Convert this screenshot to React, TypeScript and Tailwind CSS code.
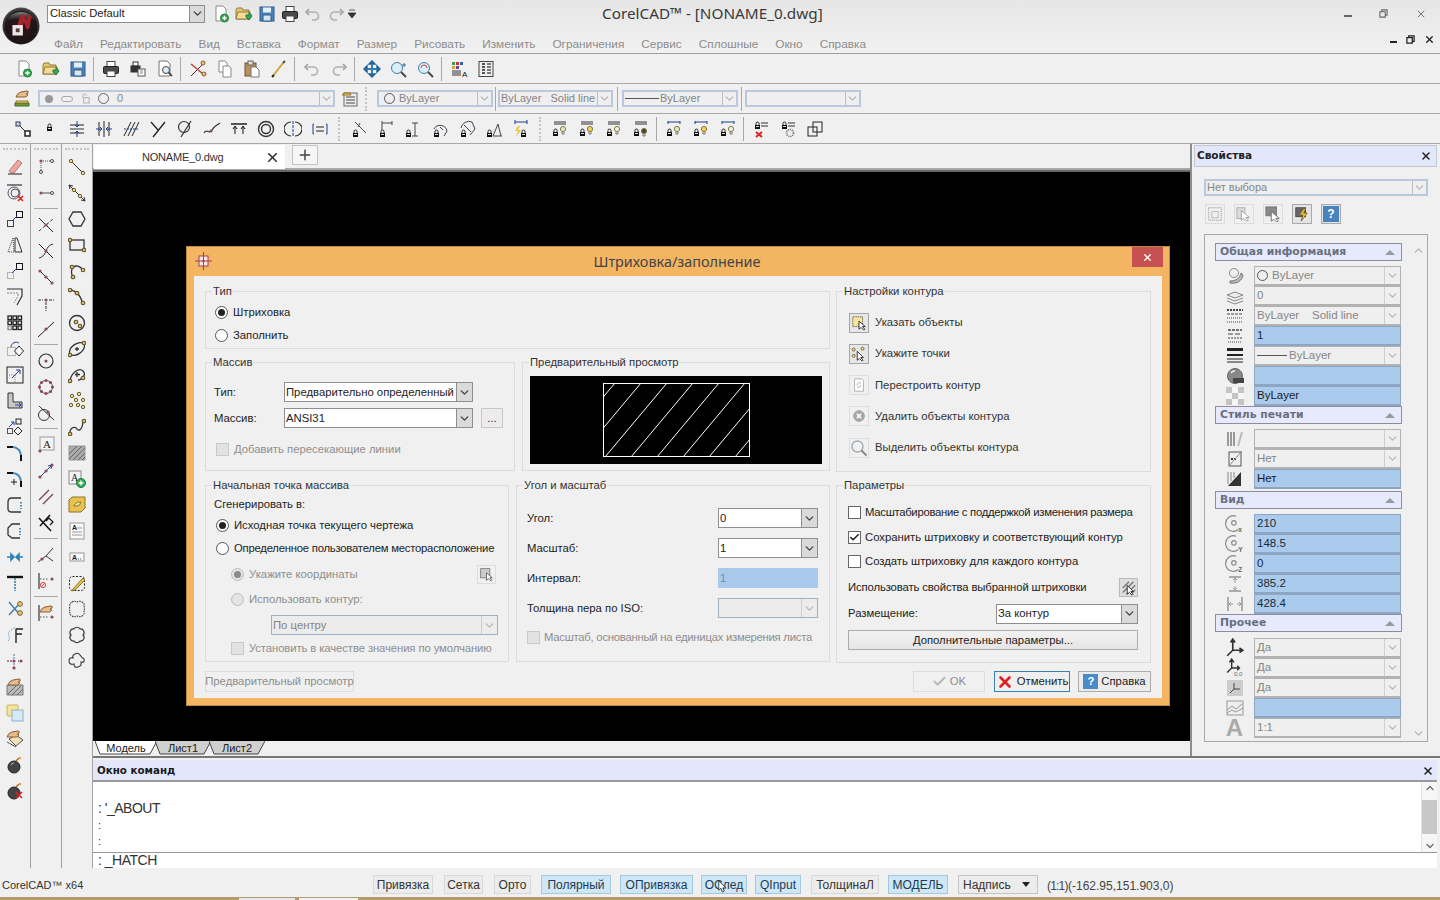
import type { ReactNode } from 'react'
import { Check, ChevronDown, ChevronUp, Plus, X } from 'lucide-react'

const Ic = ({ children, s = 18, sw = 1 }: { children?: ReactNode; s?: number; sw?: number }) => (
    <svg viewBox="0 0 18 18" width={s} height={s} fill="none" stroke="#333" strokeWidth={sw}>
        {children}
    </svg>
)

// small drawing helpers
const nr = (x: number, y: number) => <circle cx={x} cy={y} r={1.7} fill="#f3dc9a" stroke="#6b5a2a" />
const mr = (x: number, y: number) => <circle cx={x} cy={y} r={1.6} fill="#8c4a66" stroke="none" />
const op = (x: number, y: number) => <circle cx={x} cy={y} r={1.5} fill="#fff" stroke="#444" />
const lock = (x: number, y: number) => (
    <>
        <path d={`M${x + 1} ${y + 3}v-1.5a1.5 1.5 0 0 1 3 0v1.5`} stroke="#222" />
        <rect x={x} y={y + 3} width={5} height={4} fill="#111" stroke="none" />
        <rect x={x + 1} y={y + 4} width={3} height={1} fill="#ddd" stroke="none" />
    </>
)
const bulb = (x: number, y: number, f = '#f6d34f') => (
    <>
        <circle cx={x} cy={y} r={2.6} fill={f} stroke="#8a7a3a" />
        <path d={`M${x - 1} ${y + 3}v2h2v-2`} stroke="#777" />
    </>
)
const hand = (x: number, y: number) => (
    <path
        d={`M${x} ${y + 5}q1-4 5-5l6-1q2 0 1 2l-2 1 2 1-2 2h-4z`}
        fill="#e8bd8c"
        stroke="#8a5f35"
    />
)

const IconNew = () => (
    <Ic>
        <path d="M4 1h7l3 3v12H4z" fill="#fff" stroke="#8a8a8a" />
        <circle cx="12.5" cy="13" r="4" fill="#35a853" stroke="#1e7a38" />
        <path d="M12.5 10.8v4.4M10.3 13h4.4" stroke="#fff" strokeWidth="1.4" />
    </Ic>
)
const IconOpen = () => (
    <Ic>
        <path d="M1 5l1-2h5l1 2h6v9H1z" fill="#e7c86f" stroke="#94793a" />
        <path d="M3 7h12l-2 7H1z" fill="#f3dc9a" stroke="#94793a" />
        <path d="M11 10h3V7l3 4-3 4-3-3z" fill="#3aa655" stroke="#1e7a38" />
    </Ic>
)
const IconSave = () => (
    <Ic>
        <rect x="2" y="2" width="14" height="14" fill="#4f83b8" stroke="#2b5a8c" />
        <rect x="5" y="2.5" width="8" height="5" fill="#e6eef6" stroke="none" />
        <rect x="5" y="10" width="8" height="6" fill="#dbe6f0" stroke="#2b5a8c" />
    </Ic>
)
const IconPrint = () => (
    <Ic>
        <rect x="5" y="1.5" width="8" height="5" fill="#fff" stroke="#444" />
        <rect x="1.5" y="6.5" width="15" height="7" rx="1" fill="#4a4a4a" stroke="#222" />
        <rect x="5" y="11" width="8" height="5.5" fill="#fff" stroke="#444" />
    </Ic>
)
const IconUndo = () => (
    <Ic sw={1.6}>
        <path d="M5 4l-3 3 3 3" stroke="#a0a0a0" />
        <path d="M2.5 7H10a4 4 0 0 1 1 8H8" stroke="#b0b0b0" />
    </Ic>
)
const IconRedo = () => (
    <Ic sw={1.6}>
        <path d="M13 4l3 3-3 3" stroke="#a0a0a0" />
        <path d="M15.5 7H8a4 4 0 0 0-1 8h3" stroke="#b0b0b0" />
    </Ic>
)

const toolRow1: (ReactNode | 'sep')[] = [
    <IconNew />,
    <IconOpen />,
    <IconSave />,
    'sep',
    <IconPrint />,
    <Ic>
        <rect x="4" y="2" width="5" height="4" fill="#fff" />
        <rect x="2" y="6" width="9" height="6" fill="#333" />
        <rect x="9" y="9" width="7" height="7" fill="#fff" stroke="#555" />
        <path d="M11 11h3M11 13h3" stroke="#888" />
    </Ic>,
    <Ic>
        <path d="M3 1h8l3 3v12H3z" fill="#fff" stroke="#777" />
        <circle cx="10" cy="10" r="3.5" fill="#dcecf8" stroke="#444" />
        <path d="M12.5 12.5L16 16" strokeWidth="1.6" />
    </Ic>,
    'sep',
    <Ic>
        <path d="M2 16L14 4" stroke="#333" />
        <path d="M2 4l12 10" stroke="#c0392b" strokeWidth="1.3" />
        <circle cx="14" cy="3" r="2" fill="#e8c36a" stroke="#8a5f35" />
        <circle cx="15" cy="14" r="2" fill="#e8c36a" stroke="#8a5f35" />
    </Ic>,
    <Ic>
        <path d="M3 1h6l2 2v9H3z" fill="#fff" stroke="#888" />
        <path d="M7 6h6l2 2v9H7z" fill="#fff" stroke="#888" />
    </Ic>,
    <Ic>
        <rect x="2" y="3" width="11" height="13" fill="#b8925a" stroke="#6f5430" />
        <rect x="5" y="1" width="5" height="4" fill="#ddd" stroke="#666" />
        <path d="M8 7h5l3 3v7H8z" fill="#fff" stroke="#777" />
    </Ic>,
    <Ic sw={2}>
        <path d="M3 16L13 3" stroke="#d6a332" />
        <path d="M13 3l2-2" stroke="#444" />
        <path d="M2 17l2-2" stroke="#222" />
    </Ic>,
    'sep',
    <IconUndo />,
    <IconRedo />,
    'sep',
    <Ic sw={1.4}>
        <path d="M9 1l3 3H6zM9 17l3-3H6zM1 9l3-3v6zM17 9l-3-3v6z" fill="#2f7fb8" stroke="#1f5f90" />
        <path d="M9 4v10M4 9h10" stroke="#2f7fb8" strokeWidth="2" />
    </Ic>,
    <Ic>
        <circle cx="7" cy="8" r="5.5" fill="#dceef8" stroke="#3f7fa8" />
        <path d="M11 12l5 5" stroke="#444" strokeWidth="1.8" />
        <path d="M14 3v4M12 5h4" stroke="#2a6f9a" />
    </Ic>,
    <Ic>
        <circle cx="7" cy="8" r="5.5" fill="#dceef8" stroke="#3f7fa8" />
        <path d="M11 12l5 5" stroke="#444" strokeWidth="1.8" />
        <path d="M4 8a3 3 0 0 1 6 0" stroke="#c44" />
    </Ic>,
    'sep',
    <Ic>
        <rect x="2" y="2" width="3" height="3" fill="#3a9a4a" stroke="none" />
        <rect x="6" y="2" width="3" height="3" fill="#c0392b" stroke="none" />
        <rect x="10" y="2" width="3" height="3" fill="#3a5fb0" stroke="none" />
        <rect x="2" y="6" width="3" height="3" fill="#d6a332" stroke="none" />
        <rect x="6" y="6" width="3" height="3" fill="#7a3fa0" stroke="none" />
        <path d="M2 11h9M2 13h9M2 15h9" />
        <text x="12" y="17" fontSize="8" fontFamily="Liberation Sans" stroke="none" fill="#111">A</text>
    </Ic>,
    <Ic>
        <rect x="2" y="1.5" width="14" height="15" fill="#eee" stroke="#444" />
        <path d="M5 4h3M5 7h3M5 10h3M5 13h3" stroke="#222" strokeWidth="1.6" />
        <path d="M10 4h4M10 7h4M10 10h4M10 13h4" stroke="#555" strokeWidth="1.6" />
    </Ic>,
]

const linesTop = <path d="M3 2h12M3 4h12" stroke="#333" />

const toolRow3: (ReactNode | 'grip' | 'sep')[] = [
    <Ic>
        <path d="M5 5l8 8" stroke="#335" />
        <rect x="2" y="2" width="4" height="4" fill="#cdd8ee" stroke="#335" />
        <rect x="11" y="11" width="5" height="5" fill="#fff" stroke="#222" strokeWidth="1.5" />
    </Ic>,
    <Ic>{lock(6, 4)}</Ic>,
    <Ic>
        <path d="M2 9h14" />
        <path d="M2 5h14M2 13h14" stroke="#222" />
        <path d="M9 1v6l-2-2M9 7l2-2M9 17v-6l-2 2M9 11l2 2" stroke="#1c3f8f" />
    </Ic>,
    <Ic>
        <path d="M4 2v14M9 1v16M14 2v14" stroke="#222" />
        <path d="M1 9h6l-2-2M7 9l-2 2M17 9h-6l2-2M11 9l2 2" stroke="#1c3f8f" />
    </Ic>,
    <Ic>
        <path d="M2 16L9 2M6 16L13 2M10 16L17 2" stroke="#222" />
        <path d="M2 9h14" stroke="#1c3f8f" strokeDasharray="2 1" />
    </Ic>,
    <Ic sw={1.3}>
        <path d="M2 2l7 8M16 2L4 17" stroke="#222" />
    </Ic>,
    <Ic>
        <circle cx="8" cy="7" r="5.5" stroke="#333" strokeWidth="1.2" />
        <path d="M15 1L5 17" stroke="#333" strokeWidth="1.2" />
    </Ic>,
    <Ic sw={1.2}>
        <path d="M1 13c3-5 5 2 8-3s4-4 8-7" />
        {mr(8, 11)}
    </Ic>,
    <Ic>
        <path d="M1 4h16" stroke="#111" strokeWidth="1.4" />
        <path d="M5 14V7M13 14V7M3 9l2-3 2 3M11 9l2-3 2 3" stroke="#111" />
    </Ic>,
    <Ic>
        <circle cx="9" cy="9" r="7.5" strokeWidth="1.4" />
        <circle cx="9" cy="9" r="4.5" strokeWidth="1.4" />
    </Ic>,
    <Ic>
        <path d="M9 1v16" stroke="#1c3f8f" strokeDasharray="3 1" />
        <path d="M7 2a7 7 0 0 0 0 14M11 2a7 7 0 0 1 0 14" strokeWidth="1.2" />
    </Ic>,
    <Ic>
        <path d="M2 4v10h1M16 4v10h-1M2 4h1M15 4h1" stroke="#1c3f8f" />
        <path d="M5 7h8M5 11h8" stroke="#222" />
    </Ic>,
    'grip',
    <Ic>
        {lock(3, 10)}
        <path d="M5 2l11 11M10 3l-2 4" stroke="#445" />
    </Ic>,
    <Ic>
        {lock(3, 10)}
        <path d="M5 3h10M5 1v4M15 1v4M5 5v5" stroke="#445" />
    </Ic>,
    <Ic>
        {lock(2, 10)}
        <path d="M11 3v13M8 3h6M8 16h6" stroke="#445" />
    </Ic>,
    <Ic>
        {lock(3, 10)}
        <path d="M3 9a7 7 0 0 1 13 2l-3 5" stroke="#445" />
        <path d="M9 7l3 3" stroke="#445" />
    </Ic>,
    <Ic>
        {lock(3, 10)}
        <path d="M3 8a8 8 0 0 1 11-6l3 7-5 6" stroke="#445" />
        <path d="M6 5l7 7" stroke="#445" />
    </Ic>,
    <Ic>
        {lock(2, 10)}
        <path d="M8 16h9M8 16L13 4M13 4l3 12" stroke="#445" />
    </Ic>,
    <Ic>
        {lock(9, 10)}
        <path d="M3 2h12M3 0v4M15 0v4" stroke="#1c3f8f" />
        <path d="M6 6L3 11h3l-2 6 5-7H6l2-4z" fill="#e8c63c" stroke="none" />
    </Ic>,
    'grip',
    <Ic>{linesTop}{lock(2, 9)}{bulb(12, 9, '#dfe8d0')}</Ic>,
    <Ic>{linesTop}{lock(2, 9)}{bulb(12, 9)}</Ic>,
    <Ic>{linesTop}{lock(2, 9)}{bulb(12, 9, '#eee')}</Ic>,
    <Ic>{linesTop}{lock(2, 9)}{bulb(12, 11, '#444')}</Ic>,
    'sep',
    <Ic>
        <path d="M3 2h12M3 1v3M15 1v3" stroke="#1c3f8f" />
        {lock(2, 9)}
        {bulb(12, 9, '#dfe8d0')}
    </Ic>,
    <Ic>
        <path d="M3 2h12M3 1v3M15 1v3" stroke="#1c3f8f" />
        {lock(2, 9)}
        {bulb(12, 9)}
    </Ic>,
    <Ic>
        <path d="M3 2h12M3 1v3M15 1v3" stroke="#1c3f8f" />
        {lock(2, 9)}
        {bulb(12, 9, '#eee')}
    </Ic>,
    'sep',
    <Ic>
        <path d="M9 3h7M9 6h7" stroke="#333" />
        {lock(3, 2)}
        <path d="M4 12l6 5M10 12l-6 5" stroke="#d22" strokeWidth="2" />
    </Ic>,
    <Ic>
        <path d="M9 3h7M9 6h7" stroke="#333" />
        {lock(3, 2)}
        <circle cx="11" cy="13" r="3.5" stroke="#666" strokeDasharray="1 1" strokeWidth="1.6" />
    </Ic>,
    <Ic>
        <rect x="7" y="2" width="9" height="10" stroke="#222" />
        <rect x="2" y="7" width="9" height="9" stroke="#222" />
    </Ic>,
]

const col1: ReactNode[] = [
    <Ic>
        <path d="M3 13L12 2l4 3-8 10H5z" fill="#eba8a0" stroke="#b87a70" />
        <path d="M2 16h14" stroke="#555" strokeWidth="1.4" />
    </Ic>,
    <Ic>
        <path d="M1 1h15" strokeWidth="1.2" />
        <circle cx="8" cy="9" r="6" stroke="#556" />
        <circle cx="9" cy="9" r="4" stroke="#556" />
        <path d="M12 12l5 5M17 12l-5 5" stroke="#d22" strokeWidth="1.6" />
    </Ic>,
    <Ic>
        <rect x="1.5" y="10.5" width="6" height="6" stroke="#444" />
        <rect x="10.5" y="1.5" width="6" height="6" stroke="#111" />
        <path d="M6 11l5-5" stroke="#1c3f8f" />
    </Ic>,
    <Ic>
        <path d="M7 2L2 16h6z" stroke="#333" strokeDasharray="1 1" />
        <path d="M9 2h2l5 14H9z" stroke="#333" />
    </Ic>,
    <Ic>
        <rect x="1.5" y="10.5" width="6" height="6" stroke="#777" strokeDasharray="1 1" />
        <rect x="10.5" y="1.5" width="6" height="6" stroke="#111" />
        <path d="M6 11l5-5" stroke="#1c3f8f" />
    </Ic>,
    <Ic>
        <path d="M1 1h15v7l-5 9" strokeWidth="1.2" />
        <path d="M1 5h11v3l-4 7" stroke="#888" strokeDasharray="2 1" />
    </Ic>,
    <Ic sw={1.3}>
        {[2, 7, 12].flatMap((x) =>
            [2, 7, 12].map((y) => <rect key={`${x}-${y}`} x={x} y={y} width="3.5" height="3.5" stroke={y === 12 && x === 2 ? '#888' : '#222'} />),
        )}
    </Ic>,
    <Ic>
        <rect x="1.5" y="7.5" width="8" height="8" stroke="#777" strokeDasharray="1 1" />
        <path d="M13 6l4.5 5-4.5 5-4.5-5z" fill="#fff" stroke="#222" />
        <path d="M5 7c0-4 5-6 8-4" stroke="#1c3f8f" />
    </Ic>,
    <Ic>
        <rect x="1" y="1" width="16" height="16" stroke="#222" />
        <rect x="1" y="9" width="8" height="8" stroke="#888" strokeDasharray="1 1" />
        <path d="M6 12l8-8M10 4h4v4" stroke="#1c3f8f" />
    </Ic>,
    <Ic>
        <path d="M2 1h5v9h9v6H2z" fill="#c8c8c8" stroke="#333" />
        <path d="M9 13h6M13 11l2 2-2 2" stroke="#1c3f8f" />
    </Ic>,
    <Ic>
        <rect x="1.5" y="10.5" width="5" height="5" stroke="#555" />
        <rect x="10" y="1" width="5" height="5" stroke="#222" />
        <path d="M12 9l4 4-4 4-4-4z" stroke="#222" />
        <path d="M3 9l5-5M5 4h3v3" stroke="#1c3f8f" />
    </Ic>,
    <Ic sw={2}>
        <path d="M1 3h6" stroke="#111" />
        <path d="M7 3q7 1 8 8" stroke="#4a88b8" />
        <path d="M15 11v6" stroke="#111" />
    </Ic>,
    <Ic>
        <path d="M1 3h6" stroke="#111" strokeWidth="2" />
        <path d="M7 3q7 1 8 8" stroke="#4a88b8" strokeWidth="2" />
        <path d="M15 11v6" stroke="#111" strokeWidth="2" />
        <path d="M8 9v6M5 12h6" stroke="#222" />
    </Ic>,
    <Ic sw={1.3}>
        <path d="M15 2H6Q2 2 2 6v7q0 3 4 3h9" />
        <path d="M15 6v7" stroke="#4a88b8" strokeDasharray="1.5 1.5" strokeWidth="2" />
    </Ic>,
    <Ic sw={1.3}>
        <path d="M14 2H6L2 6v7l4 3h8" />
        <path d="M14 6v7" stroke="#4a88b8" strokeDasharray="1.5 1.5" strokeWidth="2" />
    </Ic>,
    <Ic>
        <path d="M1 9h5M5 6l3 3-3 3z" fill="#2f7fb8" stroke="#2f7fb8" strokeWidth="1.6" />
        <path d="M17 9h-5M13 6l-3 3 3 3z" fill="#2f7fb8" stroke="#2f7fb8" strokeWidth="1.6" />
    </Ic>,
    <Ic>
        <path d="M1 3h16" stroke="#111" strokeWidth="2.4" />
        <path d="M9 4v13" stroke="#3a7fa8" strokeWidth="1.6" strokeDasharray="2 1" />
    </Ic>,
    <Ic>
        <path d="M3 2l11 13M15 2L3 15" stroke="#3a7fa8" strokeWidth="1.4" />
        <circle cx="14" cy="4" r="2.4" fill="#e8c36a" stroke="#8a5f35" />
        <circle cx="14" cy="13" r="2.4" fill="#e8c36a" stroke="#8a5f35" />
    </Ic>,
    <Ic>
        <path d="M10 3h7M10 8h6M10 3v14" stroke="#222" strokeWidth="1.4" />
        <path d="M2 15c4-3-2-6 2-10s6-3 6-3" stroke="#6aa8cc" strokeDasharray="2 1" />
    </Ic>,
    <Ic>
        <path d="M1 9h5M12 9h1" stroke="#333" strokeDasharray="2 1" />
        <path d="M8 2v5M8 11v5" stroke="#3a7fa8" strokeDasharray="2 1" />
        {mr(8, 9)}
        {mr(15, 9)}
        {mr(8, 16)}
    </Ic>,
    <Ic>
        <path d="M1 7h16v10H1z" fill="#bbb" stroke="#777" />
        <path d="M2 16L10 8M6 17l9-9M11 17l6-6" stroke="#666" />
        {hand(2, 2)}
    </Ic>,
    <Ic>
        <rect x="1" y="1" width="11" height="11" rx="1" fill="#f5e49a" stroke="#c9b35e" />
        <rect x="6" y="6" width="11" height="11" fill="#d6eaf6" stroke="#8fb0c8" />
    </Ic>,
    <Ic>
        <path d="M3 9l7-4 7 5-7 6z" fill="#f0e0b8" stroke="#555" />
        <path d="M1 12l9 5" stroke="#555" />
        {hand(1, 2)}
    </Ic>,
    <Ic>
        <circle cx="8" cy="11" r="6" fill="#444" stroke="#222" />
        <path d="M5 9a3 3 0 0 1 3-2" stroke="#bbb" />
        <path d="M10 5l3-3" stroke="#a56a2a" strokeWidth="1.4" />
        <circle cx="14" cy="2" r="1.2" fill="#e8a22c" stroke="none" />
    </Ic>,
    <Ic>
        <circle cx="8" cy="11" r="6" fill="#444" stroke="#222" />
        <path d="M10 5l3-3" stroke="#a56a2a" strokeWidth="1.4" />
        <circle cx="14" cy="2" r="1.2" fill="#e8a22c" stroke="none" />
        <path d="M10 10l6 6M16 10l-6 6" stroke="#d22" strokeWidth="1.5" />
    </Ic>,
]

const col2: (ReactNode | 'sep')[] = [
    <Ic>
        <path d="M4 3v9M6 3h7" stroke="#555" strokeDasharray="1 1" />
        {mr(4, 3)}
        {op(4, 14)}
        {op(15, 3)}
    </Ic>,
    <Ic>
        <path d="M4 9h10" stroke="#555" />
        {mr(4, 9)}
        {op(15, 9)}
    </Ic>,
    'sep',
    <Ic>
        <path d="M2 2l14 14" stroke="#222" />
        <path d="M2 15L16 3" stroke="#333" strokeDasharray="3 2" />
        {mr(9, 9)}
    </Ic>,
    <Ic>
        <path d="M2 2l14 14" stroke="#222" />
        <path d="M2 16q5-1 7-7t7-7" stroke="#333" />
        {mr(9, 9)}
    </Ic>,
    <Ic>
        <path d="M3 3l12 12" stroke="#333" />
        {mr(3, 3)}
        {mr(15, 15)}
        {mr(9, 9)}
    </Ic>,
    <Ic>
        <path d="M1 6h5M12 6h5M9 8v9" stroke="#333" strokeDasharray="3 1" />
        {mr(9, 6)}
    </Ic>,
    <Ic>
        <path d="M1 17L17 2" stroke="#222" />
        {mr(9, 9)}
    </Ic>,
    'sep',
    <Ic>
        <circle cx="9" cy="9" r="7" stroke="#333" strokeWidth="1.2" />
        {mr(9, 9)}
    </Ic>,
    <Ic>
        <circle cx="9" cy="9" r="6.5" stroke="#555" />
        {mr(9, 2.5)}
        {mr(9, 15.5)}
        {mr(2.5, 9)}
        {mr(15.5, 9)}
        {mr(4.5, 4.5)}
        {mr(13.5, 4.5)}
        {mr(4.5, 13.5)}
        {mr(13.5, 13.5)}
    </Ic>,
    <Ic>
        <circle cx="7" cy="11" r="5.5" stroke="#333" />
        <path d="M2 2l15 14" stroke="#333" />
        {mr(11, 8)}
    </Ic>,
    'sep',
    <Ic>
        <rect x="3" y="1" width="14" height="13" fill="#f4f4f4" stroke="#999" />
        <text x="6" y="12" fontSize="11" fontFamily="Liberation Serif" stroke="none" fill="#222">A</text>
        {mr(3, 15)}
    </Ic>,
    <Ic>
        <path d="M3 15L15 3M15 3l-4 1M15 3l-1 4" stroke="#1c3f8f" />
        {mr(3, 15)}
        {mr(15, 3)}
        {mr(9, 9)}
    </Ic>,
    <Ic sw={1.2}>
        <path d="M2 12L12 2M6 16L16 6" stroke="#7a3a4a" />
    </Ic>,
    <Ic sw={1.5}>
        <path d="M2 4l12 13M13 1L3 12" stroke="#111" />
        <path d="M9 7l3-3 4 4-3 3" stroke="#111" strokeWidth="1.2" />
    </Ic>,
    'sep',
    <Ic>
        <path d="M1 16L9 10M9 10L16 2M9 10l7 5" stroke="#333" />
        {mr(5, 13)}
    </Ic>,
    <Ic>
        <path d="M2 1v16" stroke="#111" />
        <path d="M3 7h9" stroke="#555" strokeDasharray="1.5 1.5" />
        {mr(15, 7)}
        <circle cx="6" cy="13" r="2.6" stroke="#d44" />
        <path d="M4 15l4-4" stroke="#d44" />
    </Ic>,
    'sep',
    <Ic>
        <path d="M2 1v16" stroke="#111" />
        <path d="M3 13h9" stroke="#555" strokeDasharray="1.5 1.5" />
        {mr(15, 13)}
        {hand(3, 3)}
    </Ic>,
]

const col3: ReactNode[] = [
    <Ic><path d="M3 3l12 12" />{nr(3, 3)}{nr(15, 15)}</Ic>,
    <Ic>
        <path d="M1 1l16 16M1 1l4 1M1 1l1 4M17 17l-4-1M17 17l-1-4" />
        {nr(6, 6)}
        {nr(12, 12)}
    </Ic>,
    <Ic sw={1.3}><path d="M5 2h8l4 7-4 7H5L1 9z" /></Ic>,
    <Ic sw={1.3}><rect x="2" y="4" width="14" height="10" />{nr(2, 4)}{nr(16, 14)}</Ic>,
    <Ic sw={1.3}><path d="M5 15C0 7 8-1 15 8" />{nr(5, 15)}{nr(15, 8)}{nr(4, 5)}</Ic>,
    <Ic sw={1.3}><path d="M1 2q10 0 14 14" />{nr(2, 2)}{nr(9, 5)}{nr(15, 15)}</Ic>,
    <Ic sw={1.3}><circle cx="9" cy="9" r="7.5" />{nr(8, 8)}{nr(12, 12)}</Ic>,
    <Ic sw={1.3}>
        <ellipse cx="9" cy="9" rx="8.5" ry="5" transform="rotate(-35 9 9)" />
        <path d="M9 7v4M7 9h4" />
        {nr(2, 15)}
        {nr(16, 3)}
    </Ic>,
    <Ic sw={1.3}>
        <path d="M2 15C3 7 11 1 15 5s-2 9-5 9" />
        <path d="M9 6v5M7 8.5h5" />
        {nr(2, 15)}
        {nr(15, 12)}
    </Ic>,
    <Ic>{nr(4, 4)}{nr(11, 2)}{nr(8, 8)}{nr(3, 13)}{nr(10, 13)}{nr(15, 15)}{nr(15, 8)}</Ic>,
    <Ic sw={1.3}><path d="M2 15c0-7 6-6 7-4s5 2 6-7" />{nr(2, 16)}{nr(16, 3)}</Ic>,
    <Ic>
        <rect x="1" y="2" width="16" height="14" fill="#aaa" stroke="#999" />
        <path d="M1 10l8-8M1 15L14 2M5 16L17 4M10 16l7-7M14 16l3-3" stroke="#666" />
    </Ic>,
    <Ic>
        <rect x="1" y="1" width="12" height="13" fill="#f4f4f4" stroke="#888" />
        <text x="3" y="11" fontSize="10" fontFamily="Liberation Serif" stroke="none" fill="#222">A</text>
        <circle cx="13" cy="13" r="4.5" fill="#35a853" stroke="#1e7a38" />
        <path d="M13 10.5v5M10.5 13h5" stroke="#fff" strokeWidth="1.4" />
    </Ic>,
    <Ic>
        <path d="M1 4l3-3h13v11l-4 4H1z" fill="#e8c24e" stroke="#8f7325" />
        <path d="M6 9q3-4 7-3-1 4-4 4H6z" stroke="#8f7325" fill="#f5e3a0" />
    </Ic>,
    <Ic>
        <rect x="2" y="1" width="14" height="16" fill="#fafafa" stroke="#999" />
        <text x="4" y="8" fontSize="7" fontFamily="Liberation Sans" fontWeight="700" stroke="none" fill="#222">A</text>
        <path d="M9 6h5M4 10h10M4 13h10" stroke="#999" />
    </Ic>,
    <Ic>
        <rect x="2" y="5" width="14" height="8" fill="#fafafa" stroke="#999" />
        <text x="4" y="12" fontSize="7" fontFamily="Liberation Sans" fontWeight="700" stroke="none" fill="#222">A</text>
        <path d="M10 11h1M12 11h1" stroke="#555" />
    </Ic>,
    <Ic>
        <rect x="1.5" y="2.5" width="15" height="14" rx="3" stroke="#222" strokeDasharray="2 1.5" />
        <path d="M5 15l10-11 2 2L7 16l-3 1z" fill="#e5c34a" stroke="#8f7325" />
    </Ic>,
    <Ic sw={1.1}>
        <path d="M4 2q2.500-1.500 5 0q2.500-1.500 5 0q3 2 2 4 1 3 0 5 1 3-2 5-2.500 1.500-5 0-2.500 1.500-5 0-3-2-2-5-1-2 0-5-1-2 2-4z" strokeDasharray="1.5 1" />
    </Ic>,
    <Ic sw={1.1}>
        <path d="M6 3a3.500 3.500 0 0 1 6 0 3.500 3.500 0 0 1 3 6 3.500 3.500 0 0 1-3 6 3.500 3.500 0 0 1-6 0 3.500 3.500 0 0 1-3-6 3.500 3.500 0 0 1 3-6z" />
    </Ic>,
    <Ic sw={1.1}>
        <path d="M7 2q3-2 5 1t4 4q1 4-3 3 1 4-3 5-4 1-4-3-5 1-5-3t4-3q-1-3 2-4z" />
    </Ic>,
]

const Tools = ({ items }: { items: (ReactNode | 'sep' | 'grip')[] }) => (
    <>
        {items.map((it, i) =>
            it === 'sep' ? (
                <div key={i} className="mx-[2px] h-[24px] w-[2px] border-l border-[#a8a8a8]" />
            ) : it === 'grip' ? (
                <div key={i} className="flex h-[24px] w-[12px] justify-center">
                    <div className="h-[24px] border-l-2 border-dotted border-[#c4c4c4]" />
                </div>
            ) : (
                <div key={i} className="flex h-[26px] w-[27px] items-center justify-center">{it}</div>
            ),
        )}
    </>
)

const SideColumn = ({ items }: { items: (ReactNode | 'sep')[] }) => (
    <div className="flex w-[31px] flex-col items-center border-r border-[#a2a2a2] pt-[4px]">
        <div className="mb-[4px] h-[2px] w-[24px] border-t-2 border-dotted border-[#c4c4c4]" />
        {items.map((it, i) =>
            it === 'sep' ? (
                <div key={i} className="my-[2px] h-[2px] w-[24px] border-t border-[#a8a8a8]" />
            ) : (
                <div key={i} className="flex h-[26px] w-[26px] items-center justify-center">{it}</div>
            ),
        )}
    </div>
)

const Arrow = ({ muted }: { muted?: boolean }) => (
    <ChevronDown size={13} strokeWidth={2.6} className={muted ? 'text-[#b9b9b9]' : 'text-[#444]'} />
)

// dropdown used in dialog
const Combo = ({ text, w, muted, h = 'h-[20px]' }: { text?: string; w: string; muted?: boolean; h?: string }) => (
    <div className={`flex ${h} ${w} items-stretch border ${muted ? 'border-[#9fb0c4] bg-[#ececec] text-[#858585]' : 'border-[#8e8e8e] bg-white text-[#222]'}`}>
        <div className="flex flex-1 items-center overflow-hidden whitespace-nowrap pl-[1px]">{text}</div>
        <div className={`flex w-[16px] items-center justify-center border-l ${muted ? 'border-[#ccc]' : 'border-[#8e8e8e] bg-[#dadada]'}`}>
            <Arrow muted={muted} />
        </div>
    </div>
)

// dropdown used in the toolbars
const BarCombo = ({ w, children }: { w: string; children?: ReactNode }) => (
    <div className={`flex h-[17px] ${w} items-stretch border-2 border-[#b9c8da] bg-[#efefef] text-[11px] text-[#858585]`}>
        <div className="flex flex-1 items-center gap-[8px] overflow-hidden whitespace-nowrap pl-[1px]">{children}</div>
        <div className="flex w-[14px] items-center justify-center border-l border-[#bdbdbd]">
            <Arrow muted />
        </div>
    </div>
)

const Radio = ({ on, muted }: { on?: boolean; muted?: boolean }) => (
    <span className={`flex h-[13px] w-[13px] shrink-0 items-center justify-center rounded-full border ${muted ? 'border-[#bdbdbd] bg-[#e4e4e4]' : 'border-[#555] bg-white'}`}>
        {on && <span className={`h-[7px] w-[7px] rounded-full ${muted ? 'bg-[#8a8a8a]' : 'bg-[#222]'}`} />}
    </span>
)

const Box = ({ on, muted }: { on?: boolean; muted?: boolean }) => (
    <span className={`flex h-[13px] w-[13px] shrink-0 items-center justify-center border ${muted ? 'border-[#c9c9c9] bg-[#e2e2e2]' : 'border-[#666] bg-white'}`}>
        {on && <Check size={11} strokeWidth={3.5} className="text-[#222]" />}
    </span>
)

const Group = ({ title, className, children }: { title: string; className: string; children?: ReactNode }) => (
    <div className={`relative border border-[#dcdcdc] ${className}`}>
        <span className="absolute -top-[8px] left-[6px] whitespace-nowrap bg-[#f0f0f0] px-[1px] leading-[14px] text-[#333]">{title}</span>
        {children}
    </div>
)

const ContourRow = ({ label, on, icon }: { label: string; on?: boolean; icon: ReactNode }) => (
    <div className="flex h-[31.25px] items-center gap-[6px]">
        <div className={`flex h-[20px] w-[20px] items-center justify-center border ${on ? 'border-[#a5a5a5] bg-[#e6e6e6]' : 'border-[#dedede]'}`}>{icon}</div>
        <span className="text-[#333]">{label}</span>
    </div>
)

const DlgButton = ({ w, children, blue, muted }: { w: string; children?: ReactNode; blue?: boolean; muted?: boolean }) => (
    <div className={`flex h-[21px] ${w} items-center justify-center gap-[3px] whitespace-nowrap border ${blue ? 'border-[#3c7fb1] bg-[#efefef]' : muted ? 'border-[#dcdcdc] text-[#8e8e8e]' : 'border-[#acacac] bg-[#ececec]'}`}>
        {children}
    </div>
)

const Cursor = () => (
    <svg viewBox="0 0 12 14" width="11" height="13">
        <path d="M3 1v10l2.500-2 1.500 4 2-1-1.500-3.500H11z" fill="#fff" stroke="#222" strokeWidth="0.9" />
    </svg>
)

const hatch = Array.from({ length: 9 }, (_, i) => i * 26 - 50)

const HatchDialog = () => (
    <div className="absolute left-[186px] top-[246px] flex h-[460px] w-[984px] flex-col border border-[#b98a4a] bg-[#f3b562] text-[11.3px]">
        <div className="relative flex h-[29px] shrink-0 items-center justify-center font-['Noto_Sans',sans-serif] text-[14.4px] text-[#444]">
            <span className="absolute left-[8px] top-[5px]">
                <Ic>
                    <rect x="4" y="4" width="9" height="10" fill="#f8e8e0" stroke="#a0405a" />
                    <path d="M8.500 0v18M0 9h17" stroke="#a0405a" />
                    <circle cx="8.500" cy="9" r="1.300" fill="#a0405a" stroke="none" />
                </Ic>
            </span>
            <span className="-ml-[2px]">Штриховка/заполнение</span>
            <span className="absolute right-[6px] top-0 flex h-[20px] w-[31px] items-center justify-center bg-[#c75050]">
                <X size={11} strokeWidth={3} className="text-white" />
            </span>
        </div>
        <div className="mx-[7px] flex flex-1 flex-col bg-[#f0f0f0] px-[11px] pt-[15px]">
            <div className="flex gap-[6px]">
                {/* left part */}
                <div className="flex w-[625px] shrink-0 flex-col">
                    <Group title="Тип" className="h-[58px] pl-[9px] pt-[9px]">
                        <div className="flex h-[23px] items-center gap-[5px]"><Radio on /><span>Штриховка</span></div>
                        <div className="flex h-[23px] items-center gap-[5px]"><Radio /><span>Заполнить</span></div>
                    </Group>
                    <div className="mt-[13px] flex h-[109px] gap-[7px]">
                        <Group title="Массив" className="w-[310px] shrink-0 pl-[8px] pt-[16px]">
                            <div className="flex h-[26px] items-center">
                                <span className="w-[70px]">Тип:</span>
                                <Combo w="w-[189px]" text="Предварительно определенный" />
                            </div>
                            <div className="flex h-[26px] items-center">
                                <span className="w-[70px]">Массив:</span>
                                <Combo w="w-[189px]" text="ANSI31" />
                                <div className="ml-[8px] flex h-[20px] w-[22px] items-center justify-center border border-[#c8c8c8] bg-[#ececec]">...</div>
                            </div>
                            <div className="mt-[10px] flex items-center gap-[5px] pl-[2px] text-[#8e8e8e]"><Box muted /><span>Добавить пересекающие линии</span></div>
                        </Group>
                        <Group title="Предварительный просмотр" className="min-w-0 flex-1 px-[7px] pt-[13px]">
                            <div className="flex h-[88px] items-center justify-center bg-black">
                                <svg viewBox="0 0 147 74" width="147" height="74">
                                    {hatch.map((x) => (
                                        <path key={x} d={`M${x} 74L${x + 62} 0`} stroke="#fff" strokeWidth="1" />
                                    ))}
                                    <rect x="0.5" y="0.5" width="146" height="73" fill="none" stroke="#fff" />
                                </svg>
                            </div>
                        </Group>
                    </div>
                    <div className="mt-[14px] flex h-[177px] gap-[7px]">
                        <Group title="Начальная точка массива" className="w-[304px] shrink-0 pl-[8px] pt-[10px]">
                            <div className="h-[16px]">Сгенерировать в:</div>
                            <div className="mt-[2px] flex h-[23px] items-center gap-[5px] pl-[2px]"><Radio on /><span>Исходная точка текущего чертежа</span></div>
                            <div className="flex h-[23px] items-center gap-[5px] pl-[2px]"><Radio /><span className="whitespace-nowrap tracking-[-0.23px]">Определенное пользователем месторасположение</span></div>
                            <div className="flex h-[28px] items-center gap-[5px] pl-[17px] pr-[12px] text-[#8e8e8e]">
                                <Radio on muted />
                                <span className="flex-1">Укажите координаты</span>
                                <div className="flex h-[19px] w-[19px] items-center justify-center border border-[#dcdcdc]">
                                    <Ic s={15}>
                                        <rect x="2" y="2" width="11" height="11" fill="#ccc" stroke="#777" />
                                        <path d="M9 7v9l2.500-2 3 3 1-1-2.500-3H16z" fill="#fff" stroke="#555" />
                                    </Ic>
                                </div>
                            </div>
                            <div className="flex h-[23px] items-center gap-[5px] pl-[17px] text-[#8e8e8e]"><Radio muted /><span>Использовать контур:</span></div>
                            <div className="ml-[57px] mt-[4px]"><Combo muted w="w-[227px]" text="По центру" /></div>
                            <div className="mt-[5px] flex items-center gap-[5px] pl-[17px] text-[#8e8e8e]"><Box muted /><span className="whitespace-nowrap tracking-[-0.1px]">Установить в качестве значения по умолчанию</span></div>
                        </Group>
                        <Group title="Угол и масштаб" className="min-w-0 flex-1 pl-[10px] pr-[11px] pt-[17px]">
                            {['Угол:', 'Масштаб:'].map((l, i) => (
                                <div key={l} className="flex h-[30px] items-center justify-between">
                                    <span>{l}</span>
                                    <Combo w="w-[100px]" text={i === 0 ? '0' : '1'} />
                                </div>
                            ))}
                            <div className="flex h-[30px] items-center justify-between">
                                <span>Интервал:</span>
                                <div className="flex h-[20px] w-[100px] items-center bg-[#a9c9eb] pl-[2px] text-[#7a8da3]">1</div>
                            </div>
                            <div className="flex h-[30px] items-center justify-between">
                                <span>Толщина пера по ISO:</span>
                                <Combo muted w="w-[100px]" />
                            </div>
                            <div className="mt-[6px] flex items-center gap-[4px] text-[#8e8e8e]"><Box muted /><span className="whitespace-nowrap tracking-[-0.25px]">Масштаб, основанный на единицах измерения листа</span></div>
                        </Group>
                    </div>
                </div>
                {/* right part */}
                <div className="flex w-[315px] shrink-0 flex-col">
                    <Group title="Настройки контура" className="h-[181px] pl-[12px] pt-[15px]">
                        <ContourRow
                            label="Указать объекты"
                            on
                            icon={
                                <Ic s={16}>
                                    <rect x="2" y="2" width="11" height="11" fill="#f5e49a" stroke="#333" strokeDasharray="1 1" />
                                    <path d="M9 7v9l2.500-2 3 3 1-1-2.500-3H16z" fill="#fff" stroke="#222" />
                                </Ic>
                            }
                        />
                        <ContourRow
                            label="Укажите точки"
                            on
                            icon={
                                <Ic s={16}>
                                    {nr(3, 4)}
                                    {nr(3, 11)}
                                    {nr(13, 3)}
                                    <path d="M7 6v10l2.500-2 3 3 1-1-2.500-3H14z" fill="#fff" stroke="#222" />
                                </Ic>
                            }
                        />
                        <ContourRow
                            label="Перестроить контур"
                            icon={
                                <Ic s={16}>
                                    <path d="M4 2h8l2 2v12H4z" fill="#fff" stroke="#aaa" />
                                    <path d="M7 9a2.500 2.500 0 0 1 4-2M11 9a2.500 2.500 0 0 1-4 2" stroke="#999" />
                                </Ic>
                            }
                        />
                        <ContourRow
                            label="Удалить объекты контура"
                            icon={
                                <Ic s={16}>
                                    <circle cx="9" cy="9" r="6" fill="#a8a8a8" stroke="#999" />
                                    <path d="M6.500 6.500l5 5M11.500 6.500l-5 5" stroke="#fff" strokeWidth="1.8" />
                                </Ic>
                            }
                        />
                        <ContourRow
                            label="Выделить объекты контура"
                            icon={
                                <Ic s={18}>
                                    <circle cx="7.500" cy="7.500" r="5.500" fill="#eaf2f8" stroke="#aaa" strokeWidth="1.4" />
                                    <path d="M11.500 11.500l5 5" stroke="#888" strokeWidth="2" />
                                </Ic>
                            }
                        />
                    </Group>
                    <Group title="Параметры" className="mt-[13px] h-[178px] pl-[11px] pr-[12px] pt-[14px]">
                        <div className="flex h-[25px] items-center gap-[4px]"><Box /><span className="whitespace-nowrap tracking-[-0.28px]">Масштабирование с поддержкой изменения размера</span></div>
                        <div className="flex h-[24px] items-center gap-[4px]"><Box on /><span className="whitespace-nowrap">Сохранить штриховку и соответствующий контур</span></div>
                        <div className="flex h-[25px] items-center gap-[4px]"><Box /><span className="whitespace-nowrap">Создать штриховку для каждого контура</span></div>
                        <div className="flex h-[27px] items-center justify-between">
                            <span className="whitespace-nowrap tracking-[-0.12px]">Использовать свойства выбранной штриховки</span>
                            <div className="flex h-[19px] w-[19px] items-center justify-center border border-[#b9b9b9] bg-[#dedede]">
                                <Ic s={16}>
                                    <path d="M2 14L14 2M2 9l7-7M6 16L16 6M11 16l5-5" stroke="#777" strokeWidth="1.6" />
                                    <path d="M7 6v10l2.500-2 3 3 1-1-2.500-3H14z" fill="#fff" stroke="#222" />
                                </Ic>
                            </div>
                        </div>
                        <div className="flex h-[25px] items-center justify-between">
                            <span>Размещение:</span>
                            <Combo w="w-[142px]" text="За контур" />
                        </div>
                        <div className="mt-[4px] flex h-[20px] items-center justify-center border border-[#acacac] bg-gradient-to-b from-[#f2f2f2] to-[#e5e5e5]">Дополнительные параметры...</div>
                    </Group>
                </div>
            </div>
            <div className="mt-[8px] flex items-center">
                <div className="flex h-[21px] w-[149px] items-center justify-center whitespace-nowrap border border-[#dcdcdc] text-[#8e8e8e]">Предварительный просмотр</div>
                <div className="flex-1" />
                <DlgButton w="w-[72px]" muted>
                    <Check size={15} strokeWidth={3} className="text-[#b5b5b5]" /> OK
                </DlgButton>
                <div className="w-[9px]" />
                <DlgButton w="w-[76px]" blue>
                    <X size={18} strokeWidth={3.5} className="text-[#e02020]" /> Отменить
                </DlgButton>
                <div className="w-[8px]" />
                <DlgButton w="w-[73px]">
                    <span className="flex h-[15px] w-[15px] items-center justify-center bg-[#4a8ac8] font-bold text-white">?</span> Справка
                </DlgButton>
            </div>
        </div>
        <div className="h-[7px] shrink-0" />
    </div>
)

const PropField = ({ icon, text, combo, blue }: { icon?: ReactNode; text?: ReactNode; combo?: boolean; blue?: boolean }) => (
    <div className="flex h-[20px]">
        <div className="flex w-[39px] items-center justify-center">{icon}</div>
        <div className={`flex w-[147px] items-stretch border border-b-2 ${blue ? 'border-[#8ea6c2] bg-[#abcbed] text-[#1a2a3a]' : 'border-[#b2b2b2] bg-[#efefef] text-[#858585]'}`}>
            <div className="flex flex-1 items-center overflow-hidden whitespace-nowrap pl-[2px]">{text}</div>
            {combo && (
                <div className="flex w-[16px] items-center justify-center border-l border-[#cfcfcf]">
                    <Arrow muted />
                </div>
            )}
        </div>
    </div>
)

const SectionHead = ({ title }: { title: string }) => (
    <div className="flex h-[18px] w-[187px] items-center justify-between border border-[#8d8d9e] bg-[#e6eafc] pl-[4px] pr-[6px] font-['DejaVu_Sans',sans-serif] text-[10.8px] font-bold text-[#6a6f80]">
        <span>{title}</span>
        <span className="h-0 w-0 border-x-[5px] border-b-[5px] border-x-transparent border-b-[#9a9a9a]" />
    </div>
)

const Lbl = ({ t }: { t: string }) => (
    <span className="flex items-center gap-[4px]">
        <span className="h-[11px] w-[11px] rounded-full border border-[#555]" /> {t}
    </span>
)

const ViewIcon = ({ a }: { a: string }) => (
    <Ic s={20}>
        <path d="M10 2a7 7 0 1 0 2 12" stroke="#888" />
        <circle cx="8" cy="8" r="2" stroke="#888" />
        <text x="12" y="16" fontSize="6" fontWeight="700" fontFamily="Liberation Sans" stroke="none" fill="#666">{a}</text>
    </Ic>
)

const PropertiesPanel = () => (
    <div className="flex w-[250px] flex-col border-l-2 border-[#8e8e8e] pl-[2px] pr-[3px] pt-[1px] text-[11.5px]">
        <div className="flex h-[22px] items-center justify-between border border-[#c8c8d2] bg-[#e2e7fb] pl-[2px] pr-[4px] font-bold text-[#222]">
            <span className="font-['DejaVu_Sans',sans-serif] text-[10.5px]">Свойства</span>
            <X size={12} strokeWidth={3} />
        </div>
        <div className="ml-[10px] mt-[12px] w-[224px]">
            <BarCombo w="w-[224px]">Нет выбора</BarCombo>
            <div className="mt-[8px] flex gap-[9px] pl-[1px]">
                {[
                    <Ic s={14}><rect x="1" y="1" width="16" height="16" stroke="#888" strokeDasharray="1.500 1" /><rect x="5" y="6" width="8" height="8" stroke="#aaa" /></Ic>,
                    <Ic s={16}><rect x="1" y="2" width="9" height="12" fill="#ddd" stroke="#aaa" /><path d="M6 5v11l3-2 3 3 2-1-3-3h4z" fill="#fff" stroke="#999" /></Ic>,
                    <Ic s={16}><rect x="1" y="1" width="12" height="10" fill="#888" stroke="#777" /><path d="M7 6v11l3-2 3 3 2-1-3-3h4z" fill="#fff" stroke="#666" /></Ic>,
                    <Ic s={16}><rect x="2" y="2" width="11" height="10" fill="#666" stroke="#444" /><path d="M11 3L6 10h4l-2 7 7-9h-4l2-5z" fill="#e8c63c" stroke="#7a6420" /></Ic>,
                    <span className="flex h-[16px] w-[16px] items-center justify-center bg-[#4a82bf] text-[12px] font-bold text-white">?</span>,
                ].map((ic, i) => (
                    <div key={i} className={`flex h-[20px] w-[20px] items-center justify-center border ${i > 2 ? 'border-[#a9a9a9] bg-[#e4e4e4]' : 'border-[#dcdcdc]'}`}>{ic}</div>
                ))}
            </div>
            <div className="mt-[10px] flex h-[508px] justify-between border border-[#a8a8a8] pl-[10px] pt-[8px]">
                <div className="flex flex-col">
                    <SectionHead title="Общая информация" />
                    <div className="mt-[5px]" />
                    <PropField combo text={<Lbl t="ByLayer" />} icon={<Ic><circle cx="8" cy="6" r="4.500" stroke="#888" /><path d="M4 14c6 0 10-3 11-8l2 2c-1 6-6 9-13 8z" fill="#bbb" stroke="#777" /></Ic>} />
                    <PropField combo text="0" icon={<Ic><path d="M1 8l8-3 8 3-8 3z" fill="#eee" stroke="#888" /><path d="M1 11l8 3 8-3M1 14l8 3 8-3" stroke="#888" /></Ic>} />
                    <PropField combo text={'ByLayer\u00a0\u00a0\u00a0\u00a0Solid line'} icon={<Ic><path d="M1 3h16" stroke="#444" strokeWidth="2" strokeDasharray="2 1" /><path d="M1 7h16" stroke="#444" strokeDasharray="3 1" /><path d="M1 11h16M1 15h16" stroke="#444" strokeDasharray="1 1" /></Ic>} />
                    <PropField blue text="1" icon={<Ic><path d="M2 3h14" stroke="#444" strokeDasharray="3 1" strokeWidth="1.500" /><path d="M2 7h14" stroke="#444" strokeDasharray="5 2" /><path d="M2 11h14" stroke="#444" strokeDasharray="2 1" /><path d="M2 15h14" stroke="#444" strokeDasharray="1 1" /></Ic>} />
                    <PropField combo text={<span className="flex items-center"><span className="mr-[2px] inline-block w-[30px] border-t border-[#555]" />ByLayer</span>} icon={<Ic><path d="M1 2.500h16" strokeWidth="3" stroke="#222" /><path d="M1 8h16" strokeWidth="2" stroke="#222" /><path d="M1 12h16M1 15h16" stroke="#222" /></Ic>} />
                    <PropField blue icon={<Ic><circle cx="9" cy="9" r="7.500" fill="#888" stroke="#666" /><path d="M5 6a4 4 0 0 1 4-2" stroke="#eee" strokeWidth="1.500" /><rect x="7" y="11" width="11" height="5" fill="#444" stroke="none" /></Ic>} />
                    <PropField blue text={<span className="text-[#1a1a1a]">ByLayer</span>} icon={<Ic>{[0, 6, 12].flatMap((x) => [0, 6, 12].map((y) => <rect key={`${x}${y}`} x={x} y={y} width="6" height="6" stroke="none" fill={(x + y) % 12 === 0 ? '#c4c4c4' : '#f6f6f6'} />))}</Ic>} />
                    <SectionHead title="Стиль печати" />
                    <div className="mt-[5px]" />
                    <PropField combo icon={<Ic><path d="M2 2v14M5 2v14M8 2v14" stroke="#999" strokeWidth="2" /><path d="M12 16L16 2" stroke="#bbb" strokeWidth="2" /></Ic>} />
                    <PropField combo text="Нет" icon={<Ic><rect x="3" y="2" width="12" height="14" fill="#eee" stroke="#555" /><path d="M5 9h6" stroke="#333" strokeWidth="2" strokeDasharray="2 1" /><path d="M3 16L16 1" stroke="#888" /></Ic>} />
                    <PropField blue text={<span className="text-[#1a1a1a]">Нет</span>} icon={<Ic><path d="M2 16L15 2v14z" fill="#333" stroke="none" /><path d="M2 2v12M5 2v9M8 2v6" stroke="#aaa" strokeWidth="1.500" /></Ic>} />
                    <div className="mt-[2px]" />
                    <SectionHead title="Вид" />
                    <div className="mt-[5px]" />
                    <PropField blue text="210" icon={<ViewIcon a="x" />} />
                    <PropField blue text="148.5" icon={<ViewIcon a="Y" />} />
                    <PropField blue text="0" icon={<ViewIcon a="Z" />} />
                    <PropField blue text="385.2" icon={<Ic><path d="M3 2h12M3 16h12" stroke="#666" /><path d="M9 3v5M9 11v4M7 5l2-2 2 2M7 13l2 2 2-2" stroke="#999" /></Ic>} />
                    <PropField blue text="428.4" icon={<Ic><path d="M2 2v14M16 2v14" stroke="#666" /><path d="M3 9h4M11 9h4M5 7L3 9l2 2M13 7l2 2-2 2" stroke="#999" /></Ic>} />
                    <SectionHead title="Прочее" />
                    <div className="mt-[6px]" />
                    <PropField combo text="Да" icon={<Ic s={20} sw={1.500}><path d="M7 2v9l-5 5M7 11h9M5 4l2-3 2 3M13 9l3 2-3 2" stroke="#333" /></Ic>} />
                    <PropField combo text="Да" icon={<Ic s={20} sw={1.300}><path d="M6 2v7l-4 4M6 9h7M4 4l2-3 2 3M11 7l2 2-2 2" stroke="#333" /><text x="8" y="16" fontSize="5.500" fontFamily="Liberation Sans" stroke="none" fill="#666">0,0</text></Ic>} />
                    <PropField combo text="Да" icon={<Ic><rect x="1" y="1" width="16" height="16" fill="#ccc" stroke="none" /><path d="M8 4v6l-4 4M8 10h6" stroke="#444" /></Ic>} />
                    <PropField blue icon={<Ic><rect x="1" y="2" width="16" height="14" fill="#eee" stroke="#999" /><path d="M1 11l5-4 4 3 6-5M1 14l5-3 4 2 7-4" stroke="#999" /></Ic>} />
                    <PropField combo text="1:1" icon={<span className="text-[24px] font-bold leading-none text-[#aaa]">A</span>} />
                </div>
                <div className="flex w-[18px] flex-col items-center justify-between py-[1px] text-[#b4b4b4]">
                    <ChevronUp size={13} strokeWidth={2.4} />
                    <ChevronDown size={13} strokeWidth={2.4} />
                </div>
            </div>
        </div>
    </div>
)

const SheetTab = ({ label, active, w }: { label: string; active?: boolean; w: number }) => (
    <div className="relative -mr-[2px] flex h-[14px] items-center justify-center text-[11px] text-[#222]" style={{ width: w }}>
        <svg className="absolute inset-0" width={w} height={14}>
            <path d={`M0 0l5 13h${w - 12}l7-13`} fill={active ? '#fff' : '#cfcfcf'} stroke="#444" />
        </svg>
        <span className="relative">{label}</span>
    </div>
)

const StatusBtn = ({ label, w, on }: { label: string; w: string; on?: boolean }) => (
    <div className={`flex h-[19px] ${w} items-center justify-center border ${on ? 'border-[#a4c8de] bg-[#cfe6f5] text-[#1a3a55]' : 'border-[#d8d8d8] bg-[#ececec] text-[#333]'}`}>{label}</div>
)

export default function App() {
    return (
        <div className="relative flex h-[900px] w-[1440px] flex-col overflow-hidden bg-[#f0f0f0] font-['Liberation_Sans',Arial,sans-serif] text-[11.5px] text-[#222]">
            {/* Title and menu */}
            <header className="flex h-[54px] shrink-0 border-b border-[#9e9e9e] bg-gradient-to-b from-[#e6e6e6] to-[#f1f1f1]">
                <div className="w-[47px] pl-[2px] pt-[7px]">
                    <svg viewBox="0 0 40 40" width="38" height="38">
                        <defs>
                            <radialGradient id="lg" cx="50%" cy="55%" r="55%">
                                <stop offset="0%" stopColor="#3a1216" />
                                <stop offset="75%" stopColor="#1c1416" />
                                <stop offset="100%" stopColor="#555" />
                            </radialGradient>
                            <linearGradient id="gl" x1="0" y1="0" x2="0" y2="1">
                                <stop offset="0%" stopColor="#8a8a8a" />
                                <stop offset="100%" stopColor="#2a2a2a" stopOpacity="0.2" />
                            </linearGradient>
                        </defs>
                        <circle cx="20" cy="20" r="19.500" fill="url(#lg)" />
                        <path d="M5 15a15.500 13 0 0 1 30 0q-15-6-30 0z" fill="url(#gl)" />
                        <path d="M20 8l3 0 3 6 1-7 4 3-2 12-3 2-3-8-2 7h-6l3-10z" fill="#a3252c" />
                        <rect x="11" y="19" width="11" height="11" fill="#e8e8e8" />
                        <rect x="14.500" y="22.500" width="4" height="4" fill="#5a3a3a" />
                    </svg>
                </div>
                <div className="flex flex-1 flex-col">
                    <div className="flex h-[27px] items-center">
                        <div className="flex w-[555px] items-center">
                            <div className="flex h-[18px] w-[158px] items-stretch border border-[#8e8e8e] bg-white text-[11.2px] text-[#222]">
                                <div className="flex flex-1 items-center pl-[2px]">Classic Default</div>
                                <div className="flex w-[15px] items-center justify-center border-l border-[#8e8e8e] bg-[#d9d9d9]"><Arrow /></div>
                            </div>
                            <div className="ml-[4px] flex">
                                {[<IconNew />, <IconOpen />, <IconSave />, <IconPrint />, <IconUndo />, <IconRedo />].map((ic, i) => (
                                    <div key={i} className="flex h-[20px] w-[23px] items-center justify-center">{ic}</div>
                                ))}
                            </div>
                            <svg viewBox="0 0 8 10" width="8" height="10" className="ml-[1px]">
                                <path d="M1 1h6M0 4h8l-4 5z" fill="#333" stroke="#333" strokeWidth="0.8" />
                            </svg>
                        </div>
                        <div className="whitespace-nowrap font-['Noto_Sans',sans-serif] text-[15.3px] text-[#3a3a3a]">CorelCAD™ - [NONAME_0.dwg]</div>
                        <div className="flex flex-1 items-center justify-end gap-[27px] pr-[13px] text-[#666]">
                            <span className="mt-[4px] h-[2px] w-[8px] bg-[#666]" />
                            <svg viewBox="0 0 10 10" width="9" height="9" fill="none" stroke="#666" strokeWidth="1.200">
                                <path d="M3 3V1h6v6H7M1 3h6v6H1z" />
                            </svg>
                            <X size={12} strokeWidth={1.800} />
                        </div>
                    </div>
                    <div className="flex h-[26px] items-start justify-between">
                        <nav className="flex gap-[17px] pl-[7px] pt-[9px] text-[11.8px] text-[#8c8c8c]">
                            {['Файл', 'Редактировать', 'Вид', 'Вставка', 'Формат', 'Размер', 'Рисовать', 'Изменить', 'Ограничения', 'Сервис', 'Сплошные', 'Окно', 'Справка'].map((m) => (
                                <span key={m}>{m}</span>
                            ))}
                        </nav>
                        <div className="flex items-center gap-[9px] pr-[5px] pt-[7px]">
                            <span className="mt-[5px] h-[2px] w-[7px] bg-[#222]" />
                            <svg viewBox="0 0 10 10" width="9" height="9" fill="none" stroke="#222" strokeWidth="1.400">
                                <path d="M3 3V1h6v6H7M1 3h6v6H1z" />
                            </svg>
                            <X size={11} strokeWidth={3} />
                        </div>
                    </div>
                </div>
            </header>

            {/* Toolbars */}
            <div className="flex h-[30px] shrink-0 items-center border-b border-[#a8a8a8] pl-[10px]">
                <Tools items={toolRow1} />
            </div>
            <div className="flex h-[30px] shrink-0 items-center border-b border-[#a8a8a8] pl-[13px]">
                <Ic>
                    <path d="M2 13h14v3H2z" fill="#6a9a3a" stroke="#3f6a20" />
                    <path d="M3 11h12v2H3z" fill="#e8d37a" stroke="#8f7325" />
                    {hand(3, 2)}
                </Ic>
                <div className="w-[7px]" />
                <BarCombo w="w-[297px]">
                    <span className="ml-[4px] h-[8px] w-[8px] rounded-full bg-[#999]" />
                    <span className="h-[6px] w-[12px] rounded-full border border-[#aaa]" />
                    <svg viewBox="0 0 10 12" width="9" height="11" fill="none" stroke="#aaa">
                        <path d="M2 5V3a2 2 0 0 1 4 0" />
                        <rect x="3" y="5" width="6" height="6" />
                    </svg>
                    <span className="h-[11px] w-[11px] rounded-full border border-[#666]" />
                    <span>0</span>
                </BarCombo>
                <div className="flex w-[30px] justify-center">
                    <Ic>
                        <rect x="3" y="3" width="13" height="13" fill="#eee" stroke="#666" />
                        <path d="M1 5l2-2h6l1 2H3z" fill="#e8c36a" stroke="#8f7325" />
                        <path d="M5 7h9M5 10h9M5 13h9" stroke="#444" />
                    </Ic>
                </div>
                <div className="mr-[10px] h-[24px] border-l-2 border-dotted border-[#c4c4c4]" />
                <BarCombo w="w-[116px]"><span className="ml-[4px]"><Lbl t="ByLayer" /></span></BarCombo>
                <div className="mx-[2px] h-[24px] border-l border-[#a8a8a8]" />
                <BarCombo w="w-[115px]">{'ByLayer\u00a0\u00a0\u00a0Solid line'}</BarCombo>
                <div className="mx-[4px] h-[24px] border-l border-[#a8a8a8]" />
                <BarCombo w="w-[116px]">
                    <span className="flex items-center"><span className="mr-[1px] inline-block w-[34px] border-t border-[#555]" />ByLayer</span>
                </BarCombo>
                <div className="mx-[3px] h-[24px] border-l border-[#a8a8a8]" />
                <BarCombo w="w-[116px]" />
            </div>
            <div className="flex h-[30px] shrink-0 items-center border-b border-[#a8a8a8] pl-[9px]">
                <Tools items={toolRow3} />
            </div>

            <div className="flex min-h-0 flex-1">
                <SideColumn items={col1} />
                <SideColumn items={col2} />
                <SideColumn items={col3} />

                <div className="flex flex-1 flex-col">
                    <div className="flex min-h-0 flex-1">
                        {/* Drawing area */}
                        <div className="flex flex-1 flex-col">
                            <div className="flex h-[26px] shrink-0 items-start border-b-2 border-[#a8a8a8] pl-[1px] pt-[1px]">
                                <div className="flex h-[24px] w-[191px] items-center bg-white pl-[48px] pr-[5px] text-[11px] tracking-[-0.2px] text-[#333]">
                                    <span className="flex-1">NONAME_0.dwg</span>
                                    <X size={15} strokeWidth={2.600} className="text-[#333]" />
                                </div>
                                <div className="ml-[7px] flex h-[20px] w-[26px] items-center justify-center border border-[#c4c4c4] bg-[#f6f6f6]">
                                    <Plus size={16} strokeWidth={2.200} className="text-[#444]" />
                                </div>
                            </div>
                            <div className="min-h-0 flex-1 border-t-2 border-[#666] bg-black" />
                            <div className="flex h-[15px] shrink-0 pl-[2px]">
                                <SheetTab label="Модель" active w={62} />
                                <SheetTab label="Лист1" w={56} />
                                <SheetTab label="Лист2" w={56} />
                            </div>
                        </div>
                        <PropertiesPanel />
                    </div>

                    {/* Command window */}
                    <div className="h-[112px] shrink-0 border-t-2 border-[#777] pr-[3px]">
                        <div className="mt-[2px] flex h-[22px] items-center justify-between border-b-2 border-[#999] bg-[#e2e7fb] pl-[4px] pr-[3px] pt-[1px] font-['DejaVu_Sans',sans-serif] text-[10.3px] font-bold text-[#1a1a1a]">
                            <span>Окно команд</span>
                            <X size={12} strokeWidth={3} />
                        </div>
                        <div className="flex h-[71px] border-b border-[#999] bg-white">
                            <div className="flex-1 pl-[5px] pt-[18px] text-[14px] leading-[17px] tracking-[-0.5px] text-[#333]">
                                <div>: '_ABOUT</div>
                                <div className="text-[11px] leading-[16px]">:</div>
                                <div className="text-[11px] leading-[16px]">:</div>
                            </div>
                            <div className="flex w-[16px] flex-col items-center justify-between border-l border-[#e4e4e4] bg-[#f6f6f6] text-[#666]">
                                <ChevronUp size={12} strokeWidth={2.400} />
                                <div className="h-[34px] w-full bg-[#c8c8c8]" />
                                <ChevronDown size={12} strokeWidth={2.400} />
                            </div>
                        </div>
                        <div className="h-[15px] overflow-hidden bg-white pl-[5px] text-[14px] leading-[15px] tracking-[-0.5px] text-[#333]">: _HATCH</div>
                    </div>
                </div>
            </div>

            {/* Status bar */}
            <footer className="flex h-[32px] shrink-0 items-start border-b-[3px] border-[#b59a6d] pl-[2px] pt-[7px] text-[12px]">
                <div className="w-[371px] pt-[2px] text-[11px] text-[#333]">CorelCAD™ x64</div>
                <StatusBtn label="Привязка" w="w-[60px]" />
                <div className="w-[11px]" />
                <StatusBtn label="Сетка" w="w-[39px]" />
                <div className="w-[11px]" />
                <StatusBtn label="Орто" w="w-[37px]" />
                <div className="w-[10px]" />
                <StatusBtn label="Полярный" w="w-[70px]" on />
                <div className="w-[9px]" />
                <StatusBtn label="ОПривязка" w="w-[73px]" on />
                <div className="w-[8px]" />
                <StatusBtn label="ОСлед" w="w-[46px]" on />
                <div className="w-[8px]" />
                <StatusBtn label="QInput" w="w-[46px]" on />
                <div className="w-[10px]" />
                <StatusBtn label="ТолщинаЛ" w="w-[68px]" />
                <div className="w-[9px]" />
                <StatusBtn label="МОДЕЛЬ" w="w-[60px]" on />
                <div className="w-[10px]" />
                <div className="flex h-[19px] w-[80px] items-center justify-between border border-[#c4c4c4] bg-[#ececec] pl-[4px] pr-[7px] text-[#333]">
                    Надпись
                    <span className="h-0 w-0 border-x-[4px] border-t-[5px] border-x-transparent border-t-[#222]" />
                </div>
                <div className="ml-[9px] w-[21px] whitespace-nowrap pt-[2px] tracking-[-0.8px] text-[#444]">(1:1)</div>
                <div className="pt-[2px] text-[#444]">(-162.95,151.903,0)</div>
            </footer>
            <div className="absolute left-[716px] top-[880px]"><Cursor /></div>
            {/* taskbar slivers at the very bottom */}
            <div className="absolute bottom-0 left-[239px] h-[2px] w-[56px] bg-[#e8e8e8]" />
            <div className="absolute bottom-0 left-[299px] h-[2px] w-[59px] bg-[#f2f2f2]" />

            <HatchDialog />
        </div>
    )
}
